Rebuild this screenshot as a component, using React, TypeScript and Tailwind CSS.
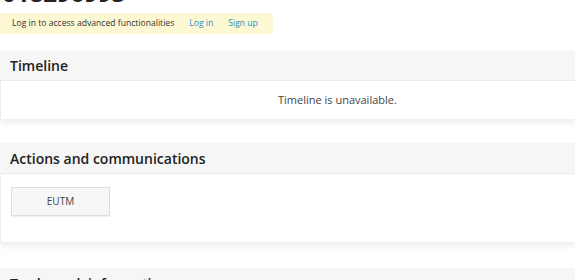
export default function App() {
  return (
    <div className="min-h-[280px] bg-white text-[#333] font-['Open_Sans',sans-serif] overflow-hidden">
      {/* Titre coupé en haut */}
      <h1 className="-mt-[22px] h-[29px] pl-[2px] text-[24px] leading-[29px] font-bold text-[#222]">
        018296993
      </h1>

      {/* Bandeau de connexion */}
      <div className="mt-[6px] flex h-[21px] w-[273px] items-center gap-[15px] rounded-r-[3px] bg-[#fcf8d3] pl-[12px] text-[8.6px]">
        <span>Log in to access advanced functionalities</span>
        <a className="text-[#2b8fc6]">Log in</a>
        <a className="text-[#2b8fc6]">Sign up</a>
      </div>

      {/* Timeline */}
      <section className="mt-[17px]">
        <div className="flex h-[30px] items-center border-b border-[#ebebeb] bg-[#f6f6f6] pl-[10px] text-[14px] font-semibold text-[#222]">
          Timeline
        </div>
        <div className="flex h-[38px] items-center border-l border-[#eee] bg-white pl-[277px] text-[11px] text-[#444] shadow-[0_4px_6px_rgba(0,0,0,0.07)]">
          Timeline is unavailable.
        </div>
      </section>

      {/* Actions et communications */}
      <section className="mt-[24px]">
        <div className="flex h-[31px] items-center border-b border-[#ebebeb] bg-[#f6f6f6] pl-[10px] text-[14px] font-semibold text-[#222]">
          Actions and communications
        </div>
        <div className="h-[68px] border-l border-[#eee] bg-white pl-[10px] pt-[13px] shadow-[0_4px_6px_rgba(0,0,0,0.07)]">
          <button className="flex h-[29px] w-[99px] items-center justify-center border border-[#ddd] bg-[#f7f7f7] text-[10px] text-[#444] shadow-[0_1px_1px_rgba(0,0,0,0.06)]">
            EUTM
          </button>
        </div>
      </section>

      {/* Section suivante, coupée en bas */}
      <section className="mt-[26px]">
        <div className="h-[31px] bg-[#f6f6f6] pl-[10px] pt-[6px] text-[14px] leading-[20px] font-semibold text-[#222]">
          Trademark information
        </div>
      </section>
    </div>
  );
}
